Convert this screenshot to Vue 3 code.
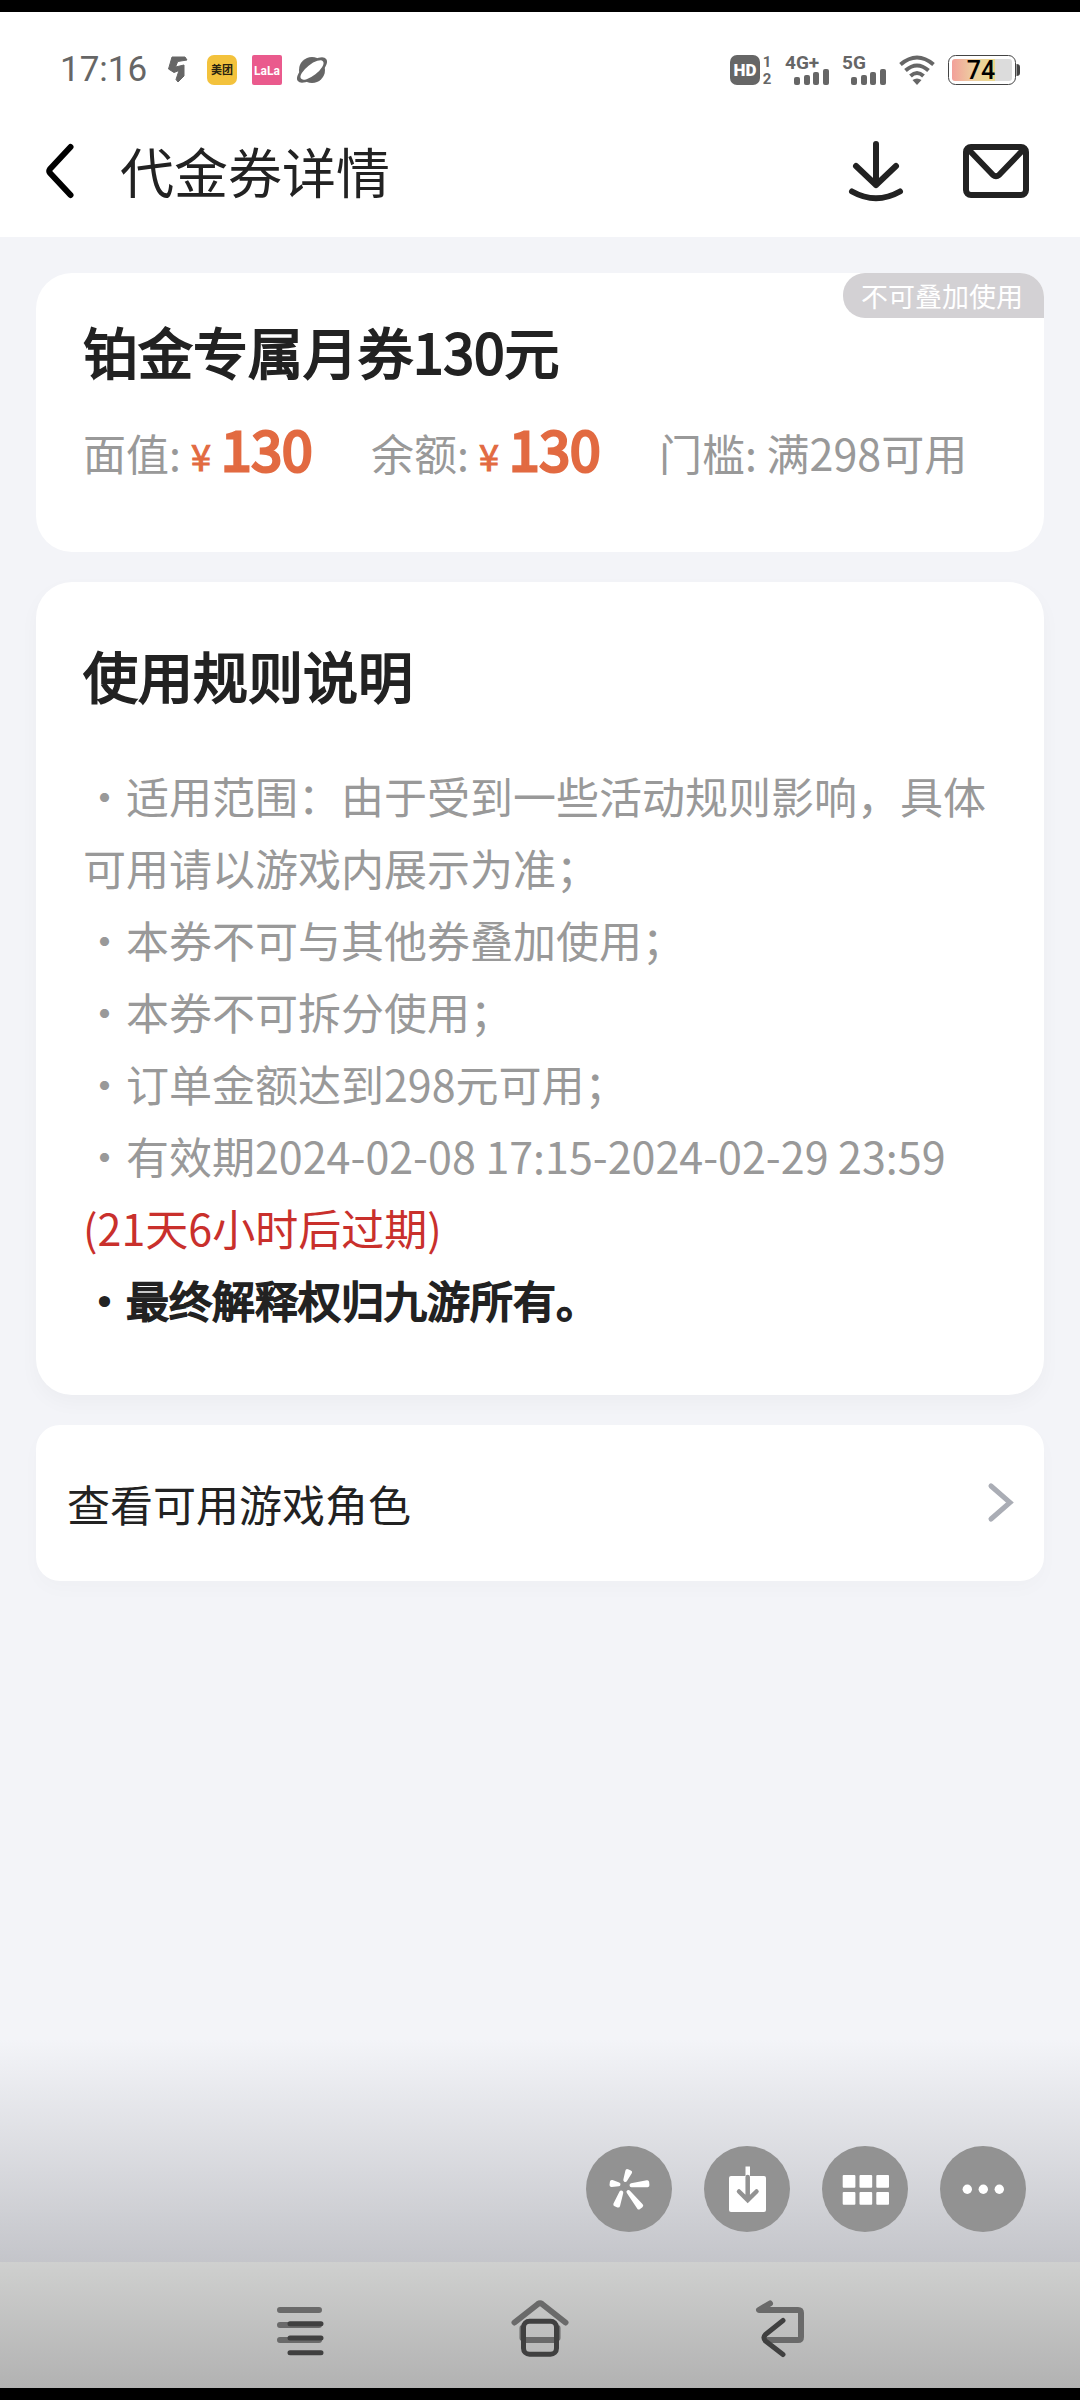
<script setup>
const amounts = [
  { label: '面值:', value: '130' },
  { label: '余额:', value: '130' },
]

const rules = [
  '・适用范围：由于受到一些活动规则影响，具体可用请以游戏内展示为准；',
  '・本券不可与其他券叠加使用；',
  '・本券不可拆分使用；',
  '・订单金额达到298元可用；',
]

const signals = ['4G+', '5G']

// Tapered petal: wide at the outer end, narrow toward the centre.
function petal([x1, y1, x2, y2]) {
  const len = Math.hypot(x2 - x1, y2 - y1)
  const nx = (-(y2 - y1) / len) * 1.5
  const ny = ((x2 - x1) / len) * 1.5
  return `M${x1 + nx} ${y1 + ny}L${x1 - nx} ${y1 - ny}L${x2} ${y2}Z`
}
const petals = [
  [42.7, 25.7, 39.3, 34],
  [25.7, 37.5, 32.5, 38.3],
  [61.3, 37.7, 45.5, 39.3],
  [30.7, 59, 35.3, 46.5],
  [54, 60.5, 42.5, 46],
].map(petal)
</script>

<template>
  <div class="screen">
    <header class="top">
      <div class="status">
        <div class="status-group left">
          <span class="time">17:16</span>
          <svg width="30" height="30" viewBox="0 0 30 30">
            <path d="M10 2H23L25 5L15.700 6.500L13.500 12L22 10V21L16 27L14 24.500L17 15.500L12 17.500L6.500 14Z" fill="#666" stroke="#666" stroke-linejoin="round" />
          </svg>
          <svg width="30" height="30" viewBox="0 0 30 30">
            <rect width="30" height="30" rx="7" fill="#f3c23c" />
            <text x="15" y="19" text-anchor="middle" font-size="11" font-weight="700" fill="#2b2410">美团</text>
          </svg>
          <svg width="30" height="30" viewBox="0 0 30 30">
            <rect width="30" height="30" rx="2" fill="#ea5a8d" />
            <text x="15" y="20" text-anchor="middle" class="latin" font-size="12" font-weight="700" fill="#fff">LaLa</text>
          </svg>
          <svg width="30" height="30" viewBox="0 0 30 30">
            <circle cx="15" cy="15" r="13" fill="#666" />
            <ellipse cx="15" cy="15" rx="18" ry="8" transform="rotate(-38 15 15)" fill="#666" />
            <ellipse cx="15" cy="15" rx="14" ry="5.500" transform="rotate(-38 15 15)" fill="#fff" />
          </svg>
        </div>
        <div class="status-group right">
          <svg width="42" height="30" viewBox="0 0 42 30">
            <rect width="30" height="30" rx="7" fill="#666" />
            <text x="15" y="21" text-anchor="middle" class="latin" font-size="17" font-weight="900" fill="#fff">HD</text>
            <text x="37" y="12" text-anchor="middle" class="latin" font-size="15" font-weight="700" fill="#666">1</text>
            <text x="37" y="29" text-anchor="middle" class="latin" font-size="15" font-weight="700" fill="#666">2</text>
          </svg>
          <svg v-for="name in signals" :key="name" width="44" height="30" viewBox="0 0 44 30">
            <text x="0" y="14" class="latin" font-size="19" font-weight="700" fill="#666">{{ name }}</text>
            <rect x="9" y="22" width="6" height="8" rx="2" fill="#666" />
            <rect x="19" y="20" width="6" height="10" rx="2" fill="#666" />
            <rect x="28" y="17" width="6" height="13" rx="2" fill="#666" />
            <rect x="38" y="14" width="6" height="16" rx="2" fill="#666" />
          </svg>
          <svg width="36" height="30" viewBox="0 0 36 30" fill="none" stroke="#666" stroke-width="4">
            <path d="M1.500 9.500Q18 -4.500 34.500 9.500M6.500 15.500Q18 5.500 29.500 15.500M11.500 21Q18 15 24.500 21" />
            <path d="M13.500 25Q18 22 22.500 25L18 30Z" fill="#666" stroke="none" />
          </svg>
          <svg width="72" height="30" viewBox="0 0 72 30">
            <defs>
              <linearGradient id="charge">
                <stop offset="0" stop-color="#f2a09a" />
                <stop offset="0.500" stop-color="#eecfa0" />
                <stop offset="1" stop-color="#ead98a" />
              </linearGradient>
            </defs>
            <rect x="0.500" y="0.500" width="67" height="29" rx="7" fill="#fff" stroke="#444" />
            <path d="M44 4H61Q64 4 64 7V23Q64 26 61 26H44Z" fill="#dcdcdc" />
            <path d="M7 4H47V26H7Q4 26 4 23V7Q4 4 7 4Z" fill="url(#charge)" />
            <path d="M68.500 9Q72 9 72 12V18Q72 21 68.500 21Z" fill="#444" />
            <text x="33" y="24" text-anchor="middle" class="latin" font-size="25" font-weight="500" fill="#000">74</text>
          </svg>
        </div>
      </div>

      <div class="bar">
        <button class="icon-button" aria-label="返回">
          <svg width="28" height="54" viewBox="0 0 28 54" fill="none" stroke="#000" stroke-width="6" stroke-linecap="round" stroke-linejoin="round">
            <path d="M24.500 3L4 25Q2.500 27 4 29L24.500 51" />
          </svg>
        </button>
        <h1>代金券详情</h1>
        <button class="icon-button" aria-label="下载">
          <svg width="54" height="60" viewBox="0 0 54 60" fill="none" stroke="#222" stroke-width="6" stroke-linecap="round" stroke-linejoin="round">
            <path d="M27 3V44M7 25L27 44L47 25M3 50.500Q27 64 51 50.500" />
          </svg>
        </button>
        <button class="icon-button" aria-label="消息">
          <svg width="66" height="54" viewBox="0 0 66 54" fill="none" stroke="#222" stroke-width="6" stroke-linecap="round" stroke-linejoin="round">
            <rect x="3" y="3" width="60" height="48" rx="5" />
            <path d="M6 6L30 31Q33 33.500 36 31L60 6" />
          </svg>
        </button>
      </div>
    </header>

    <main class="content">
      <section class="card coupon">
        <span class="badge">不可叠加使用</span>
        <h2>铂金专属月券130元</h2>
        <div class="facts">
          <div v-for="item in amounts" :key="item.label" class="fact">
            <span class="label">{{ item.label }}</span>
            <span class="yen">¥</span>
            <strong class="amount">{{ item.value }}</strong>
          </div>
          <div class="fact"><span class="label">门槛: 满298可用</span></div>
        </div>
      </section>

      <section class="card rules">
        <h2>使用规则说明</h2>
        <ul>
          <li v-for="rule in rules" :key="rule">{{ rule }}</li>
          <li>・有效期2024-02-08 17:15-2024-02-29 23:59 <span class="expiry">(21天6小时后过期)</span></li>
          <li class="final">・最终解释权归九游所有。</li>
        </ul>
      </section>

      <a class="card roles" href="#">
        <span>查看可用游戏角色</span>
        <svg width="24" height="38" viewBox="0 0 24 38" fill="none" stroke="#aaadb5" stroke-width="5" stroke-linecap="round">
          <path d="M2 2L21 18.500L2 35" />
        </svg>
      </a>
    </main>

    <div class="tools">
      <button class="tool" aria-label="特效">
        <svg viewBox="0 0 86 86" fill="#fff" stroke="#fff" stroke-width="4" stroke-linejoin="round">
          <path v-for="p in petals" :key="p" :d="p" />
        </svg>
      </button>
      <button class="tool" aria-label="保存">
        <svg viewBox="0 0 86 86">
          <rect x="25" y="30" width="37" height="36" rx="2" fill="#fff" />
          <rect x="41.500" y="20.500" width="4.500" height="10" fill="#fff" />
          <path d="M43.700 31V54M35 45.500L43.700 54L52.500 45.500" fill="none" stroke="#929292" stroke-width="4.500" stroke-linecap="round" />
        </svg>
      </button>
      <button class="tool" aria-label="应用">
        <svg viewBox="0 0 86 86" fill="#fff">
          <template v-for="y in [29, 46]" :key="y">
            <rect v-for="x in [20.700, 37.500, 54.300]" :key="x" :x="x" :y="y" width="12.700" height="12.700" rx="1" />
          </template>
        </svg>
      </button>
      <button class="tool" aria-label="更多">
        <svg viewBox="0 0 86 86" fill="#fff">
          <circle v-for="x in [27.300, 43.300, 59.300]" :key="x" :cx="x" cy="43.300" r="4.700" />
        </svg>
      </button>
    </div>

    <nav class="nav">
      <button class="icon-button" aria-label="最近任务">
        <svg width="60" height="60" viewBox="0 0 60 60" fill="none" stroke-linecap="round">
          <path d="M10 10H49M10 25H49M10 40H49" stroke="#6a6a6a" stroke-width="6" />
          <path d="M20 23.700H51M20 38H51M20 52.700H51" stroke="#404040" stroke-width="5" />
        </svg>
      </button>
      <button class="icon-button" aria-label="主页">
        <svg width="60" height="60" viewBox="0 0 60 60" fill="none" stroke-linecap="round" stroke-linejoin="round">
          <path d="M4.500 22.500L28 4Q30 2.500 32 4L55.500 22.500" stroke="#6a6a6a" stroke-width="6" />
          <path d="M12.500 28V38M47.500 28V38M14 40H46" stroke="#6a6a6a" stroke-width="6" />
          <rect x="13.500" y="21.300" width="33" height="33" rx="6" stroke="#404040" stroke-width="5" />
        </svg>
      </button>
      <button class="icon-button" aria-label="后退">
        <svg width="60" height="60" viewBox="0 0 60 60" fill="none" stroke-linecap="round" stroke-linejoin="round">
          <path d="M20 3.500L9 10H48Q51 10 51 13V37Q51 40 48 40H18" stroke="#6a6a6a" stroke-width="6" />
          <path d="M33 20.500L15.500 34.500Q12.500 37.500 15.500 41L33 54.500" stroke="#404040" stroke-width="5" />
        </svg>
      </button>
    </nav>
  </div>
</template>

<style>
body {
  margin: 0;
  background: #000;
}
</style>

<style scoped>
.screen {
  display: flex;
  flex-direction: column;
  box-sizing: border-box;
  min-height: 100vh;
  border-top: 12px solid #000;
  border-bottom: 12px solid #000;
  background: #f3f4f8;
  color: #222;
  font-family: "Noto Sans CJK SC", sans-serif;
}

svg {
  display: block;
  flex: none;
  overflow: visible;
}

.latin {
  font-family: Roboto, sans-serif;
}

h1,
h2,
ul {
  margin: 0;
  padding: 0;
}

.icon-button,
.tool {
  padding: 0;
  border: 0;
  background: none;
}

.top {
  background: #fff;
}

.status {
  display: flex;
  justify-content: space-between;
  padding: 43px 60px 20px;
}

.status-group {
  display: flex;
  align-items: center;
  height: 30px;
}

.left {
  gap: 15px;
}

.right {
  gap: 13px;
}

.time {
  color: #666;
  font: 35px/30px Roboto, sans-serif;
}

.bar {
  display: flex;
  align-items: center;
  gap: 60px;
  height: 132px;
  padding: 0 51px 0 46px;
}

h1 {
  flex: 1;
  margin-left: -14px;
  font-size: 54px;
  font-weight: 400;
  line-height: 72px;
}

.content {
  display: flex;
  flex: 1;
  flex-direction: column;
  gap: 30px;
  padding: 36px;
}

.card {
  position: relative;
  border-radius: 36px;
  background: #fff;
}

/* Semi-bold look with the advance widths of the regular weight */
h2,
.yen,
.amount,
.final {
  font-weight: 400;
  -webkit-text-stroke: 2px currentColor;
}

h2 {
  font-size: 55px;
  line-height: 72px;
}

.coupon {
  padding: 41px 47px 69px;
  border-top-right-radius: 24px;
}

.badge {
  position: absolute;
  top: 0;
  right: 0;
  padding: 0 21px 0 18px;
  border-radius: 22px 24px 0 22px;
  background: #d3d1d4;
  color: #fff;
  font-size: 27px;
  line-height: 45px;
}

.facts {
  display: grid;
  grid-template-columns: 288px 288px 1fr;
  align-items: baseline;
  margin-top: 25px;
}

.fact {
  display: flex;
  align-items: baseline;
  white-space: nowrap;
}

.label {
  color: #999;
  font-size: 43px;
  line-height: 1;
}

.yen,
.amount {
  color: #e26a41;
}

.yen {
  margin: 0 10px;
  font-size: 36px;
  line-height: 1;
  -webkit-text-stroke-width: 1px;
}

.amount {
  font-size: 55px;
  line-height: 72px;
  -webkit-text-stroke-width: 3px;
}

.rules {
  padding: 56px 47px 60px;
  box-shadow: 0 8px 20px rgba(0, 0, 0, 0.03);
}

ul {
  margin-top: 49px;
  color: #999;
  font-size: 43px;
  line-height: 72px;
  list-style: none;
}

.expiry {
  display: block;
  color: #c9302c;
}

.final {
  color: #222;
}

.roles {
  display: flex;
  align-items: center;
  justify-content: space-between;
  padding: 42px 31px;
  border-radius: 24px;
  box-shadow: 0 8px 20px rgba(0, 0, 0, 0.02);
  color: #222;
  font-size: 43px;
  line-height: 72px;
  text-decoration: none;
}

.tools {
  display: flex;
  justify-content: flex-end;
  gap: 32px;
  padding: 106px 54px 30px;
  background: linear-gradient(#f3f4f8, #c4c5ca);
}

.tool {
  width: 86px;
  height: 86px;
  border-radius: 50%;
  background: #929292;
}

.nav {
  display: flex;
  align-items: center;
  justify-content: center;
  gap: 180px;
  padding: 38px 0 28px;
  background: linear-gradient(#cfd0cf, #b2b2b2);
}
</style>
